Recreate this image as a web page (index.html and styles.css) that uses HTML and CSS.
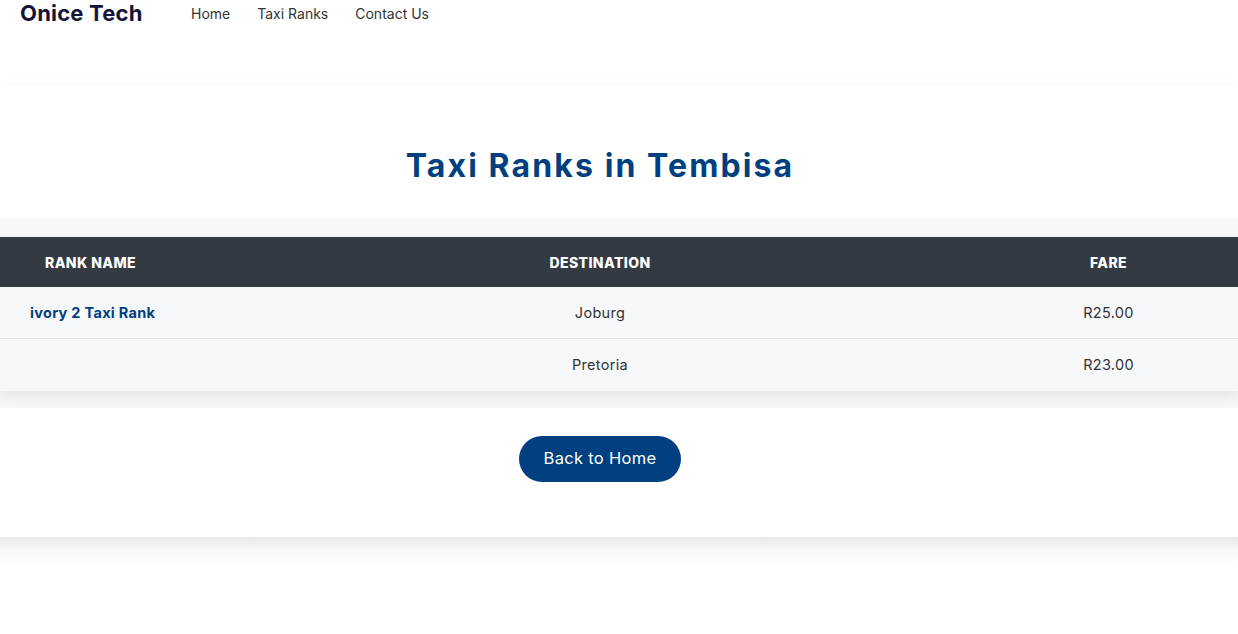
FILE: index.html
```html
<!DOCTYPE html>
<html>
<head>
    <link rel="stylesheet" href="styles.css">
    <title>Taxi Ranks in Tembisa</title>
</head>
<body>
    <header class="navbar">
        <div class="logo">Onice Tech</div>
        <nav class="nav-links">
            <a href="#">Home</a>
            <a href="#">Taxi Ranks</a>
            <a href="#">Contact Us</a>
        </nav>
    </header>

    <section class="card">
        <h2 class="title">Taxi Ranks in Tembisa</h2>

        <div class="table-wrap">
            <table class="rank-table">
                <colgroup>
                    <col class="w-name">
                    <col class="w-dest">
                    <col>
                </colgroup>
                <thead>
                    <tr>
                        <th class="col-name">RANK NAME</th>
                        <th class="col-dest">DESTINATION</th>
                        <th class="col-fare">FARE</th>
                    </tr>
                </thead>
                <tbody>
                    <tr>
                        <td class="col-name rank">ivory 2 Taxi Rank</td>
                        <td class="col-dest">Joburg</td>
                        <td class="col-fare">R25.00</td>
                    </tr>
                    <tr>
                        <td class="col-name rank"></td>
                        <td class="col-dest">Pretoria</td>
                        <td class="col-fare">R23.00</td>
                    </tr>
                </tbody>
            </table>
        </div>

        <div class="actions">
            <a href="#" class="btn">Back to Home</a>
        </div>
    </section>
    <div class="page-end"></div>
</body>
</html>
```

FILE: styles.css
```css
body {
    margin: 0;
    font-family: Inter, "Liberation Sans", sans-serif;
    color: #333;
    background: #fff;
}

.navbar {
    display: flex;
    align-items: center;
    height: 26px;
    padding: 0 20px;
    margin-bottom: 60px;
}

.logo {
    font-size: 22px;
    font-weight: 700;
    color: #14143a;
    letter-spacing: 0.2px;
    width: 171px;
}

.nav-links {
    display: flex;
    gap: 27px;
}

    .nav-links a {
        font-size: 14px;
        color: #333;
        text-decoration: none;
    }

.card {
    background: #fff;
    box-shadow: 0 -3px 10px rgba(0, 0, 0, 0.025);
}

.page-end {
    height: 26px;
    background: linear-gradient(to bottom, #e8e8e8, #f6f6f6 45%, #fff);
}

.title {
    margin: 0;
    padding: 60px 38px 32px 0;
    text-align: center;
    font-size: 32px;
    font-weight: 700;
    line-height: 40px;
    letter-spacing: 2.1px;
    color: #003f80;
}

.table-wrap {
    background: #f6f7fb;
    padding: 19px 0 17px;
}

.rank-table {
    width: 100%;
    border-collapse: collapse;
    table-layout: fixed;
    box-shadow: 0 6px 12px rgba(0, 0, 0, 0.07);
}

.w-name {
    width: 345px;
}

.w-dest {
    width: 510px;
}

    .rank-table th {
        background: #343a42;
        color: #fff;
        font-size: 14px;
        font-weight: 800;
        letter-spacing: 0.4px;
        height: 50px;
        padding: 0;
    }

    .rank-table td {
        background: #f7f8fa;
        font-size: 14.5px;
        letter-spacing: 0.3px;
        color: #333;
        height: 51px;
        padding: 0;
        border-bottom: 1px solid #e2e4e7;
    }

    .rank-table tbody tr:last-child td {
        border-bottom: none;
        height: 50px;
        padding-bottom: 2px;
    }

.col-name {
    text-align: left;
}

th.col-name {
    padding-left: 45px;
}

td.col-name {
    padding-left: 30px;
}

.col-dest {
    text-align: center;
}

th.col-fare,
td.col-fare {
    text-align: center;
    padding-left: 124px;
}

.rank {
    font-weight: 700;
    color: #003f80 !important;
}

.actions {
    display: flex;
    justify-content: center;
    padding: 28px 38px 55px 0;
}

.btn {
    display: inline-block;
    width: 162px;
    height: 46px;
    line-height: 45px;
    text-align: center;
    border-radius: 23px;
    background: #003f80;
    color: #fff;
    font-size: 16.5px;
    letter-spacing: 0.3px;
    text-decoration: none;
}
```
